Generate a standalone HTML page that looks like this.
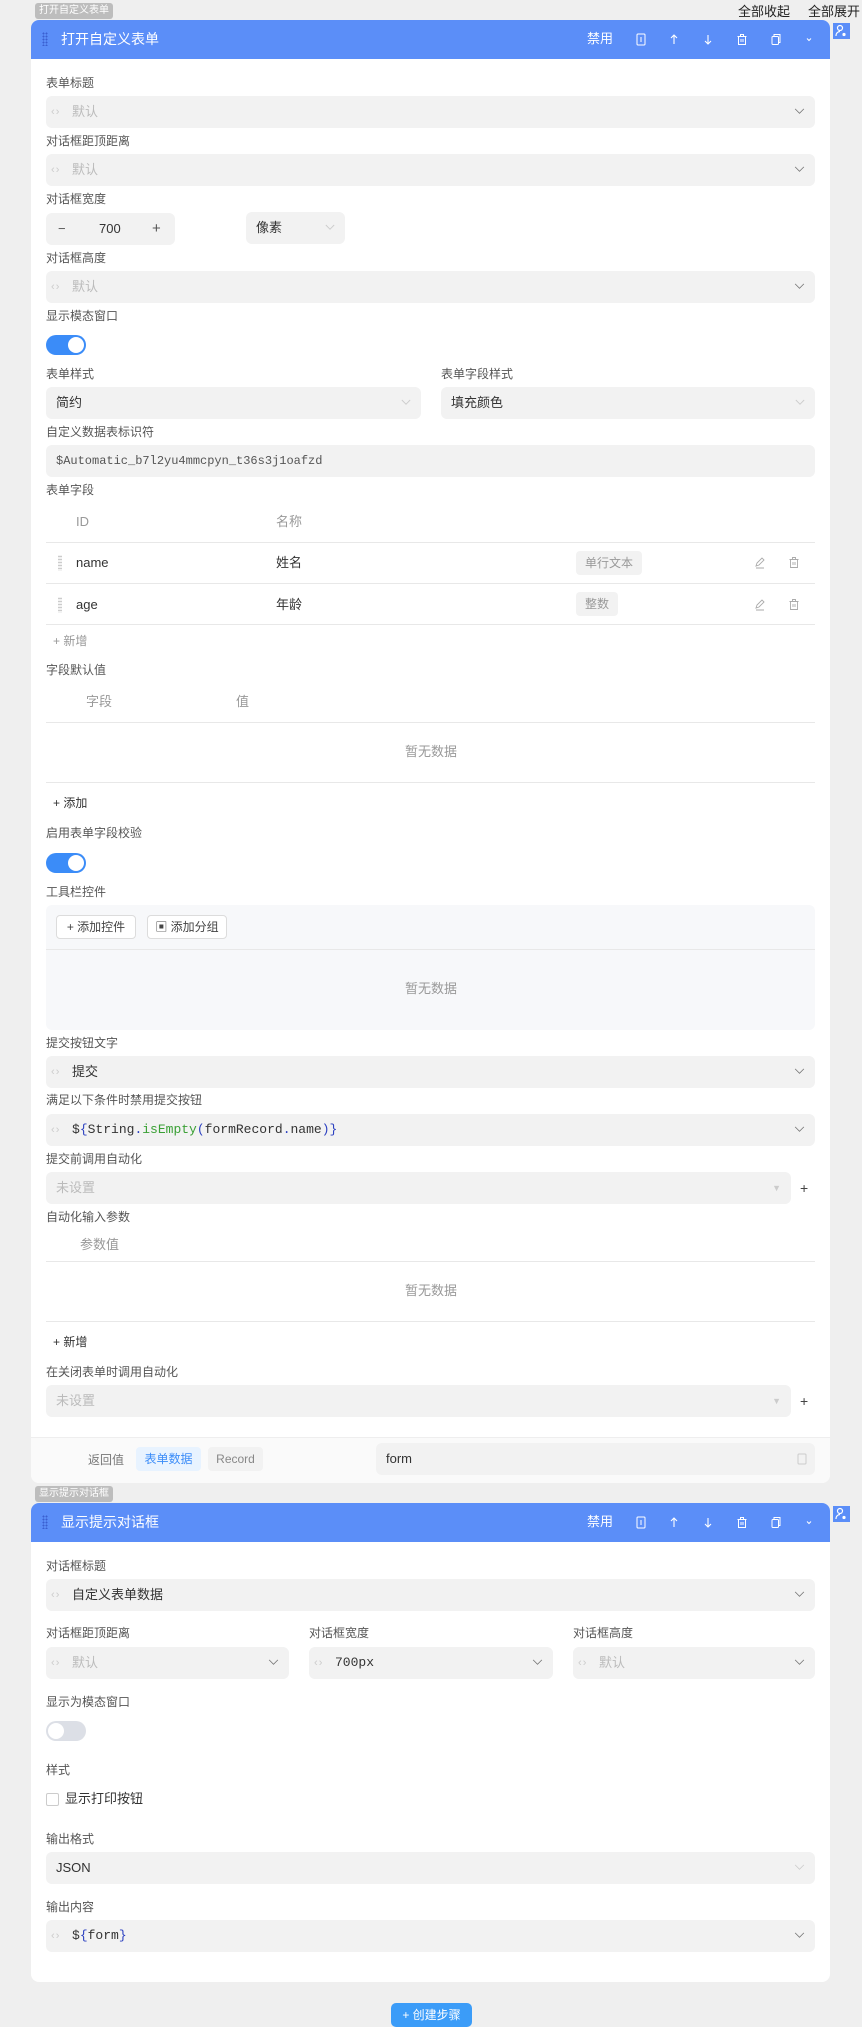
<!DOCTYPE html>
<html><head><meta charset="utf-8"><style>
*{box-sizing:border-box;margin:0;padding:0}
body{width:862px;height:2027px;background:#efefef;position:relative;overflow:hidden;font-family:"Liberation Sans","Noto Sans CJK SC",sans-serif;color:#333;line-height:16px}
.a{position:absolute}
.card{position:absolute;left:31px;width:799px;background:#fff;border-radius:8px;overflow:hidden}
.hd{position:absolute;left:31px;width:799px;height:39px;background:#5b8ef8;border-radius:8px 8px 0 0;color:#fff}
.hd .t{position:absolute;left:30px;top:11px;font-size:14px;line-height:17px}
.hd .dr{position:absolute;left:11px;top:12px;width:6px;height:14px;background-image:radial-gradient(circle,#3a5fd0 0.9px,transparent 1.1px);background-size:3px 3px}
.hd .dis{position:absolute;left:556px;top:11px;font-size:13px}
.hd svg{position:absolute;top:13px}
.badge{position:absolute;height:16px;background:#bdbdbd;color:#fff;font-size:10px;line-height:16px;padding:0 4px;border-radius:3px}
.lbl{position:absolute;left:46px;font-size:12px;color:#555;line-height:16px}
.inp{position:absolute;background:#f2f2f2;border-radius:6px;height:32px;font-size:13px;line-height:32px}
.ci{position:absolute;left:5px;top:0;color:#ccc;font-size:11px;letter-spacing:-1px}
.ph{position:absolute;left:26px;color:#bbb}
.vt{position:absolute;left:26px;color:#333}
.chev{position:absolute;right:10px;top:12px}
.mono{font-family:"Liberation Mono","DejaVu Sans Mono",monospace}
.tg{position:absolute;height:24px;top:0;font-size:12px;line-height:24px;padding:0 9px;border-radius:4px}
.line{position:absolute;left:46px;width:769px;height:1px;background:#e8e8e8}
.gray{color:#999}
.tog{position:absolute;left:46px;width:40px;height:20px;border-radius:10px}
.tog i{position:absolute;top:2px;width:16px;height:16px;border-radius:50%;background:#fff}
.btn{position:absolute;height:24px;border:1px solid #dcdcdc;border-radius:4px;background:#fff;font-size:12px;line-height:22px;color:#444;text-align:center}
</style></head><body>

<div class="badge" style="left:35px;top:3px">打开自定义表单</div>
<div class="a" style="left:738px;top:4px;font-size:13px;color:#222">全部收起</div>
<div class="a" style="left:808px;top:4px;font-size:13px;color:#222">全部展开</div>
<div class="a" style="left:833px;top:23px;width:17px;height:16px;background:#5b8ef8"><svg width="17" height="16" viewBox="0 0 17 16"><circle cx="7" cy="5" r="2.5" fill="none" stroke="#fff" stroke-width="1.2"/><path d="M3 13c0-3 2-4.5 4-4.5" fill="none" stroke="#fff" stroke-width="1.2"/><circle cx="11" cy="11.5" r="1.6" fill="#fff"/></svg></div>

<!-- Card 1 -->
<div class="card" style="top:20px;height:1463px"></div>
<div class="a" style="left:31px;top:1437px;width:799px;height:46px;background:#fafafa;border-top:1px solid #eee;border-radius:0 0 8px 8px"></div>
<div class="hd" style="top:20px">
 <div class="dr"></div><div class="t">打开自定义表单</div><div class="dis">禁用</div>
 <svg style="left:604px" width="12" height="13" viewBox="0 0 12 13"><rect x="2" y="1" width="8" height="11" rx="1" fill="none" stroke="#fff" stroke-width="1"/><path d="M6 4v5" stroke="#fff"/></svg>
 <svg style="left:637px" width="12" height="13" viewBox="0 0 12 13"><path d="M6 11V2M3 5l3-3 3 3" fill="none" stroke="#fff" stroke-width="1.1"/></svg>
 <svg style="left:671px" width="12" height="13" viewBox="0 0 12 13"><path d="M6 2v9M3 8l3 3 3-3" fill="none" stroke="#fff" stroke-width="1.1"/></svg>
 <svg style="left:705px" width="12" height="13" viewBox="0 0 12 13"><path d="M1.5 3.5h9M4.5 3.5V1.5h3v2M2.5 3.5v8h7v-8M5 6v3M7 6v3" fill="none" stroke="#fff" stroke-width="1"/></svg>
 <svg style="left:739px" width="12" height="13" viewBox="0 0 12 13"><rect x="2" y="3.5" width="6.5" height="8" rx="1" fill="none" stroke="#fff"/><path d="M4 3.5V1.5h6v8h-1.5" fill="none" stroke="#fff"/></svg>
 <svg style="left:772px" width="12" height="13" viewBox="0 0 12 13"><path d="M4 5.5l2 2 2-2" fill="none" stroke="#fff" stroke-width="1"/></svg>
</div>

<div class="lbl" style="top:75px">表单标题</div>
<div class="inp" style="left:46px;top:96px;width:769px"><span class="ci">‹ ›</span><span class="ph">默认</span><svg class="chev" width="11" height="7" viewBox="0 0 12 8"><path d="M1 1l5 5 5-5" fill="none" stroke="#777" stroke-width="1"/></svg></div>
<div class="lbl" style="top:133px">对话框距顶距离</div>
<div class="inp" style="left:46px;top:154px;width:769px"><span class="ci">‹ ›</span><span class="ph">默认</span><svg class="chev" width="11" height="7" viewBox="0 0 12 8"><path d="M1 1l5 5 5-5" fill="none" stroke="#777" stroke-width="1"/></svg></div>
<div class="lbl" style="top:191px">对话框宽度</div>
<div class="inp" style="left:46px;top:213px;width:129px"><span class="a" style="left:12px;color:#555;line-height:32px">−</span><span class="a" style="left:53px;color:#333;line-height:32px">700</span><span class="a" style="left:106px;color:#555;font-size:15px;line-height:32px">+</span></div>
<div class="inp" style="left:246px;top:212px;width:99px"><span class="a" style="left:10px;color:#333;line-height:32px">像素</span><svg class="chev" width="10" height="7" viewBox="0 0 12 8"><path d="M1 1l5 5 5-5" fill="none" stroke="#ccc" stroke-width="1.1"/></svg></div>
<div class="lbl" style="top:250px">对话框高度</div>
<div class="inp" style="left:46px;top:271px;width:769px"><span class="ci">‹ ›</span><span class="ph">默认</span><svg class="chev" width="11" height="7" viewBox="0 0 12 8"><path d="M1 1l5 5 5-5" fill="none" stroke="#777" stroke-width="1"/></svg></div>
<div class="lbl" style="top:308px">显示模态窗口</div>
<div class="tog" style="top:335px;background:#3b8cf8"><i style="left:22px"></i></div>

<div class="lbl" style="top:366px">表单样式</div>
<div class="lbl" style="top:366px;left:441px">表单字段样式</div>
<div class="inp" style="left:46px;top:387px;width:375px"><span class="a" style="left:10px;line-height:32px">简约</span><svg class="chev" width="10" height="7" viewBox="0 0 12 8"><path d="M1 1l5 5 5-5" fill="none" stroke="#ccc" stroke-width="1.1"/></svg></div>
<div class="inp" style="left:441px;top:387px;width:374px"><span class="a" style="left:10px;line-height:32px">填充颜色</span><svg class="chev" width="10" height="7" viewBox="0 0 12 8"><path d="M1 1l5 5 5-5" fill="none" stroke="#ccc" stroke-width="1.1"/></svg></div>
<div class="lbl" style="top:424px">自定义数据表标识符</div>
<div class="inp mono" style="left:46px;top:445px;width:769px;font-size:12px;color:#555"><span class="a" style="left:10px;line-height:32px">$Automatic_b7l2yu4mmcpyn_t36s3j1oafzd</span></div>

<div class="lbl" style="top:482px">表单字段</div>
<div class="a gray" style="left:76px;top:514px;font-size:13px">ID</div>
<div class="a gray" style="left:276px;top:514px;font-size:13px">名称</div>
<div class="line" style="top:542px"></div>
<div class="a" style="left:58px;top:555px;width:4px;height:16px;background-image:radial-gradient(circle,#ccc 0.8px,transparent 1px);background-size:2px 3px"></div>
<div class="a" style="left:76px;top:555px;font-size:13px">name</div>
<div class="a" style="left:276px;top:555px;font-size:13px">姓名</div>
<div class="a" style="left:576px;top:551px;width:66px;height:24px"><span class="tg" style="left:0;background:#f2f2f2;color:#999">单行文本</span></div>
<svg class="a" style="left:754px;top:556px" width="12" height="13" viewBox="0 0 12 13"><path d="M2 10l1-3 5-5 2 2-5 5zM2 12h8" fill="none" stroke="#aaa" stroke-width="0.9"/></svg>
<svg class="a" style="left:788px;top:556px" width="12" height="13" viewBox="0 0 12 13"><path d="M1.5 3.5h9M4.5 3.5V1.5h3v2M2.5 3.5v8h7v-8M5 6v3M7 6v3" fill="none" stroke="#aaa" stroke-width="0.9"/></svg>
<div class="line" style="top:583px"></div>
<div class="a" style="left:58px;top:597px;width:4px;height:16px;background-image:radial-gradient(circle,#ccc 0.8px,transparent 1px);background-size:2px 3px"></div>
<div class="a" style="left:76px;top:597px;font-size:13px">age</div>
<div class="a" style="left:276px;top:597px;font-size:13px">年龄</div>
<div class="a" style="left:576px;top:592px;width:44px;height:24px"><span class="tg" style="left:0;background:#f2f2f2;color:#999">整数</span></div>
<svg class="a" style="left:754px;top:598px" width="12" height="13" viewBox="0 0 12 13"><path d="M2 10l1-3 5-5 2 2-5 5zM2 12h8" fill="none" stroke="#aaa" stroke-width="0.9"/></svg>
<svg class="a" style="left:788px;top:598px" width="12" height="13" viewBox="0 0 12 13"><path d="M1.5 3.5h9M4.5 3.5V1.5h3v2M2.5 3.5v8h7v-8M5 6v3M7 6v3" fill="none" stroke="#aaa" stroke-width="0.9"/></svg>
<div class="line" style="top:624px"></div>
<div class="a gray" style="left:53px;top:633px;font-size:12px">+ 新增</div>

<div class="lbl" style="top:662px">字段默认值</div>
<div class="a gray" style="left:86px;top:694px;font-size:13px">字段</div>
<div class="a gray" style="left:236px;top:694px;font-size:13px">值</div>
<div class="line" style="top:722px"></div>
<div class="a gray" style="left:0;width:862px;text-align:center;top:744px;font-size:13px">暂无数据</div>
<div class="line" style="top:782px"></div>
<div class="a" style="left:53px;top:795px;font-size:12px;color:#333">+ 添加</div>
<div class="lbl" style="top:825px">启用表单字段校验</div>
<div class="tog" style="top:853px;background:#3b8cf8"><i style="left:22px"></i></div>

<div class="lbl" style="top:884px">工具栏控件</div>
<div class="a" style="left:46px;top:905px;width:769px;height:125px;background:#f7f8fa;border-radius:6px"></div>
<div class="a" style="left:46px;top:949px;width:769px;height:1px;background:#e8e8e8"></div>
<div class="btn" style="left:56px;top:915px;width:80px">+ 添加控件</div>
<div class="btn" style="left:147px;top:915px;width:80px">▣ 添加分组</div>
<div class="a gray" style="left:0;width:862px;text-align:center;top:981px;font-size:13px">暂无数据</div>

<div class="lbl" style="top:1035px">提交按钮文字</div>
<div class="inp" style="left:46px;top:1056px;width:769px"><span class="ci">‹ ›</span><span class="vt">提交</span><svg class="chev" width="11" height="7" viewBox="0 0 12 8"><path d="M1 1l5 5 5-5" fill="none" stroke="#777" stroke-width="1"/></svg></div>
<div class="lbl" style="top:1092px">满足以下条件时禁用提交按钮</div>
<div class="inp" style="left:46px;top:1114px;width:769px"><span class="ci">‹ ›</span><span class="vt mono">$<span style="color:#2a3fc0">{</span>String<span style="color:#2a3fc0">.</span><span style="color:#3aa035">isEmpty</span><span style="color:#2a3fc0">(</span>formRecord<span style="color:#2a3fc0">.</span>name<span style="color:#2a3fc0">)}</span></span><svg class="chev" width="11" height="7" viewBox="0 0 12 8"><path d="M1 1l5 5 5-5" fill="none" stroke="#777" stroke-width="1"/></svg></div>
<div class="lbl" style="top:1151px">提交前调用自动化</div>
<div class="inp" style="left:46px;top:1172px;width:745px"><span class="a" style="left:10px;color:#bbb;line-height:32px">未设置</span><span class="a" style="right:10px;color:#ccc;font-size:9px;line-height:32px">▼</span></div>
<div class="a" style="left:800px;top:1180px;font-size:14px;color:#444">+</div>
<div class="lbl" style="top:1209px">自动化输入参数</div>
<div class="a gray" style="left:80px;top:1237px;font-size:13px">参数值</div>
<div class="line" style="top:1261px"></div>
<div class="a gray" style="left:0;width:862px;text-align:center;top:1283px;font-size:13px">暂无数据</div>
<div class="line" style="top:1321px"></div>
<div class="a" style="left:53px;top:1334px;font-size:12px;color:#333">+ 新增</div>
<div class="lbl" style="top:1364px">在关闭表单时调用自动化</div>
<div class="inp" style="left:46px;top:1385px;width:745px"><span class="a" style="left:10px;color:#bbb;line-height:32px">未设置</span><span class="a" style="right:10px;color:#ccc;font-size:9px;line-height:32px">▼</span></div>
<div class="a" style="left:800px;top:1393px;font-size:14px;color:#444">+</div>

<div class="a" style="left:88px;top:1452px;font-size:12px;color:#777">返回值</div>
<div class="a" style="left:136px;top:1447px;width:65px;height:24px;background:#e8f3ff;color:#3b8cf8;border-radius:4px;font-size:12px;line-height:24px;text-align:center">表单数据</div>
<div class="a" style="left:208px;top:1447px;width:55px;height:24px;background:#f2f2f2;color:#888;border-radius:4px;font-size:12px;line-height:24px;text-align:center">Record</div>
<div class="inp" style="left:376px;top:1443px;width:439px"><span class="a" style="left:10px;line-height:32px">form</span><svg class="a" style="right:8px;top:10px" width="10" height="12" viewBox="0 0 10 12"><rect x="1" y="1" width="8" height="10" rx="1" fill="none" stroke="#ccc"/></svg></div>

<!-- Card 2 -->
<div class="badge" style="left:35px;top:1486px">显示提示对话框</div>
<div class="a" style="left:833px;top:1506px;width:17px;height:16px;background:#5b8ef8"><svg width="17" height="16" viewBox="0 0 17 16"><circle cx="7" cy="5" r="2.5" fill="none" stroke="#fff" stroke-width="1.2"/><path d="M3 13c0-3 2-4.5 4-4.5" fill="none" stroke="#fff" stroke-width="1.2"/><circle cx="11" cy="11.5" r="1.6" fill="#fff"/></svg></div>
<div class="card" style="top:1503px;height:479px"></div>
<div class="hd" style="top:1503px">
 <div class="dr"></div><div class="t">显示提示对话框</div><div class="dis">禁用</div>
 <svg style="left:604px" width="12" height="13" viewBox="0 0 12 13"><rect x="2" y="1" width="8" height="11" rx="1" fill="none" stroke="#fff" stroke-width="1"/><path d="M6 4v5" stroke="#fff"/></svg>
 <svg style="left:637px" width="12" height="13" viewBox="0 0 12 13"><path d="M6 11V2M3 5l3-3 3 3" fill="none" stroke="#fff" stroke-width="1.1"/></svg>
 <svg style="left:671px" width="12" height="13" viewBox="0 0 12 13"><path d="M6 2v9M3 8l3 3 3-3" fill="none" stroke="#fff" stroke-width="1.1"/></svg>
 <svg style="left:705px" width="12" height="13" viewBox="0 0 12 13"><path d="M1.5 3.5h9M4.5 3.5V1.5h3v2M2.5 3.5v8h7v-8M5 6v3M7 6v3" fill="none" stroke="#fff" stroke-width="1"/></svg>
 <svg style="left:739px" width="12" height="13" viewBox="0 0 12 13"><rect x="2" y="3.5" width="6.5" height="8" rx="1" fill="none" stroke="#fff"/><path d="M4 3.5V1.5h6v8h-1.5" fill="none" stroke="#fff"/></svg>
 <svg style="left:772px" width="12" height="13" viewBox="0 0 12 13"><path d="M4 5.5l2 2 2-2" fill="none" stroke="#fff" stroke-width="1"/></svg>
</div>

<div class="lbl" style="top:1558px">对话框标题</div>
<div class="inp" style="left:46px;top:1579px;width:769px"><span class="ci">‹ ›</span><span class="vt">自定义表单数据</span><svg class="chev" width="11" height="7" viewBox="0 0 12 8"><path d="M1 1l5 5 5-5" fill="none" stroke="#777" stroke-width="1"/></svg></div>
<div class="lbl" style="top:1625px">对话框距顶距离</div>
<div class="lbl" style="top:1625px;left:309px">对话框宽度</div>
<div class="lbl" style="top:1625px;left:573px">对话框高度</div>
<div class="inp" style="left:46px;top:1647px;width:243px"><span class="ci">‹ ›</span><span class="ph">默认</span><svg class="chev" width="11" height="7" viewBox="0 0 12 8"><path d="M1 1l5 5 5-5" fill="none" stroke="#777" stroke-width="1"/></svg></div>
<div class="inp" style="left:309px;top:1647px;width:244px"><span class="ci">‹ ›</span><span class="vt mono">700px</span><svg class="chev" width="11" height="7" viewBox="0 0 12 8"><path d="M1 1l5 5 5-5" fill="none" stroke="#777" stroke-width="1"/></svg></div>
<div class="inp" style="left:573px;top:1647px;width:242px"><span class="ci">‹ ›</span><span class="ph">默认</span><svg class="chev" width="11" height="7" viewBox="0 0 12 8"><path d="M1 1l5 5 5-5" fill="none" stroke="#777" stroke-width="1"/></svg></div>
<div class="lbl" style="top:1694px">显示为模态窗口</div>
<div class="tog" style="top:1721px;background:#dcdfe6"><i style="left:2px"></i></div>
<div class="lbl" style="top:1762px">样式</div>
<div class="a" style="left:46px;top:1793px;width:13px;height:13px;border:1px solid #ccc;border-radius:2px;background:#fff"></div>
<div class="a" style="left:65px;top:1791px;font-size:13px;color:#333">显示打印按钮</div>
<div class="lbl" style="top:1831px">输出格式</div>
<div class="inp" style="left:46px;top:1852px;width:769px"><span class="a" style="left:10px;line-height:32px">JSON</span><svg class="chev" width="11" height="7" viewBox="0 0 12 8"><path d="M1 1l5 5 5-5" fill="none" stroke="#ccc" stroke-width="1"/></svg></div>
<div class="lbl" style="top:1899px">输出内容</div>
<div class="inp" style="left:46px;top:1920px;width:769px"><span class="ci">‹ ›</span><span class="vt mono">$<span style="color:#2a3fc0">{</span>form<span style="color:#2a3fc0">}</span></span><svg class="chev" width="11" height="7" viewBox="0 0 12 8"><path d="M1 1l5 5 5-5" fill="none" stroke="#777" stroke-width="1"/></svg></div>

<div class="a" style="left:391px;top:2003px;width:81px;height:24px;background:#3b9cf8;border-radius:5px;color:#fff;font-size:12px;line-height:24px;text-align:center">+ 创建步骤</div>
</body></html>
